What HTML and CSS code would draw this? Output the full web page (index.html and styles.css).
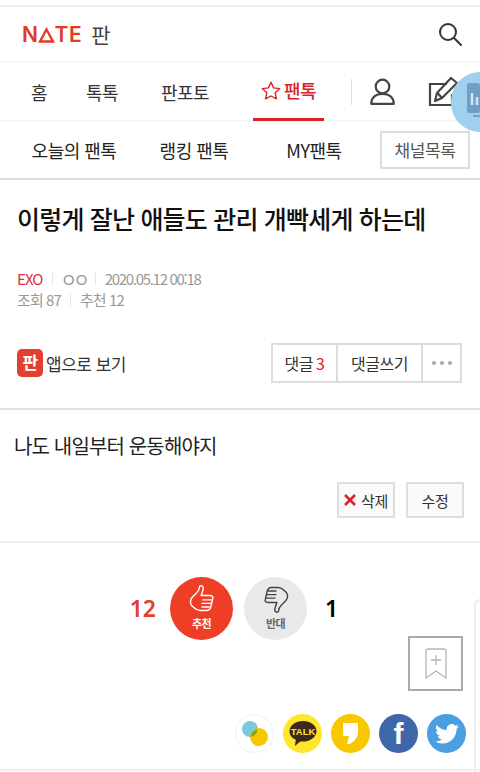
FILE: index.html
```html
<!DOCTYPE html>
<html lang="ko">
<head>
  <meta charset="UTF-8">
  <meta name="viewport" content="width=device-width, initial-scale=1.0">
  <title>NATE 판 - 팬톡</title>
  <link rel="stylesheet" href="styles.css">
</head>
<body>
  <div class="page">
    <header class="header">
      <div class="logo">
        <span class="logo-nate">N<span class="logo-a">A<svg width="17" height="16" viewBox="0 0 17 16" fill="none" stroke="#e23b1f" stroke-width="2.400" stroke-linejoin="miter"><path d="M8.500 2.500L15 14.500H2z"/></svg></span>TE</span>
        <span class="logo-pann">판</span>
      </div>
      <svg class="search-icon" width="26" height="26" viewBox="0 0 26 26" fill="none" stroke="#333" stroke-width="2"><circle cx="11" cy="11" r="8"/><path d="M17 17l7 7" stroke-linecap="round"/></svg>
    </header>

    <nav class="nav">
      <a class="nav-item nav-home">홈</a>
      <a class="nav-item nav-talk">톡톡</a>
      <a class="nav-item nav-photo">판포토</a>
      <a class="nav-item nav-fan">
        <svg width="20" height="19" viewBox="0 0 20 19" fill="none" stroke="#d8232a" stroke-width="1.400" stroke-linejoin="round"><path d="M10 1.200l2.600 5.700 6.100.7-4.500 4.200 1.200 6.100L10 15l-5.400 2.900 1.200-6.100L1.300 7.600l6.100-.7z"/></svg>
        팬톡
      </a>
      <span class="nav-divider"></span>
      <svg class="nav-user" width="25" height="27" viewBox="0 0 25 27" fill="none" stroke="#444" stroke-width="2.200"><circle cx="12.500" cy="8.500" r="6.800"/><path d="M1.200 25.800c0-6 4.300-10 11.300-10s11.300 4 11.300 10z" stroke-linejoin="round"/></svg>
      <svg class="nav-write" width="32" height="32" viewBox="0 0 32 32" fill="none" stroke="#444" stroke-width="2.200"><path d="M19 8H2v21h22V18"/><path d="M7 25l2-8L23 2l6 5-15 15z" stroke-linejoin="round"/><path d="M9.500 17l4.500 5" /></svg>
    </nav>

    <div class="subnav">
      <a class="subnav-item">오늘의 팬톡</a>
      <a class="subnav-item">랭킹 팬톡</a>
      <a class="subnav-item">MY팬톡</a>
      <a class="channel-btn">채널목록</a>
    </div>

    <section class="post-head">
      <h1 class="post-title">이렇게 잘난 애들도 관리 개빡세게 하는데</h1>
      <div class="meta">
        <span class="meta-channel">EXO</span><span class="meta-sep"></span><span class="meta-author">ㅇㅇ</span><span class="meta-sep"></span><span class="meta-date">2020.05.12 00:18</span>
      </div>
      <div class="meta">
        <span>조회 87</span><span class="meta-sep"></span><span>추천 12</span>
      </div>
      <div class="post-actions">
        <div class="app-link">
          <span class="app-icon">판</span>
          <span>앱으로 보기</span>
        </div>
        <div class="btn-group">
          <a class="group-btn group-reply">댓글 <em>3</em></a>
          <a class="group-btn group-write">댓글쓰기</a>
          <a class="group-btn group-more"><i></i><i></i><i></i></a>
        </div>
      </div>
    </section>

    <section class="post-body">
      <p class="post-text">나도 내일부터 운동해야지</p>
      <div class="edit-row">
        <a class="edit-btn"><svg width="12" height="12" viewBox="0 0 12 12" stroke="#d8232a" stroke-width="2.600"><path d="M1 1l10 10M11 1L1 11"/></svg>삭제</a>
        <a class="edit-btn">수정</a>
      </div>
    </section>

    <section class="vote">
      <div class="vote-row">
        <span class="vote-count vote-count-up">12</span>
        <div class="vote-btn vote-up">
          <svg width="28" height="30" viewBox="0 0 30 34" fill="none" stroke="#fff" stroke-width="1.600" stroke-linejoin="round" stroke-linecap="round"><path d="M14 2c2 0 3 2 2 5l-2 6h10c3 0 4 2 3 4l-2 9c-1 3-3 4-5 4h-7c-3 0-5-1-7-3l-3-3c-2-3-1-7 1-9l5-5c3-3 3-5 3-6 0-1 1-2 2-2z"/><path d="M16 18h10M15 22h10M15 26h9"/></svg>
          <span class="vote-label">추천</span>
        </div>
        <div class="vote-btn vote-down">
          <svg width="28" height="30" viewBox="0 0 30 34" fill="none" stroke="#444" stroke-width="1.600" stroke-linejoin="round" stroke-linecap="round"><path d="M16 32c-2 0-3-2-2-5l2-6H6c-3 0-4-2-3-4l2-9c1-3 3-4 5-4h7c3 0 5 1 7 3l3 3c2 3 1 7-1 9l-5 5c-3 3-3 5-3 6 0 1-1 2-2 2z"/><path d="M14 16H4M15 12H5M15 8H6"/></svg>
          <span class="vote-label">반대</span>
        </div>
        <span class="vote-count vote-count-down">1</span>
      </div>
      <div class="bookmark-row">
        <a class="bookmark-btn">
          <svg width="22" height="31" viewBox="0 0 22 31" fill="none" stroke="#b5b5b5" stroke-width="1.300"><path d="M1 3a2 2 0 012-2h16a2 2 0 012 2v27l-10-7-10 7z"/><path d="M11 7v10M6 12h10"/></svg>
        </a>
      </div>
      <div class="share-row">
        <span class="share share-line">
          <svg width="27" height="27" viewBox="0 0 27 27"><circle cx="9" cy="9" r="8" fill="#7cc8de"/><circle cx="18" cy="17" r="9" fill="#f7c800"/><path d="M9.500 17a9 9 0 017-8 8 8 0 01-7 8z" fill="#7fa82c"/><path d="M14 26l5-1-4-2z" fill="#f7c800"/></svg>
        </span>
        <span class="share share-talk">
          <svg width="30" height="27" viewBox="0 0 32 30"><path d="M16 1c8.500 0 15 5 15 11.500S24.500 24 16 24c-1 0-2 0-3-.2L7 29l1-7C3.500 20 1 16.500 1 12.500 1 6 7.500 1 16 1z" fill="#3a2a1c"/><text x="16" y="16.500" class="talk-text">TALK</text></svg>
        </span>
        <span class="share share-story">
          <svg width="15" height="21" viewBox="0 0 15 21"><path d="M0 0h15v9c0 5-3 9-8 12H4l2-8H0z" fill="#fff"/></svg>
        </span>
        <span class="share share-fb">f</span>
        <span class="share share-tw">
          <svg width="24" height="20" viewBox="0 0 24 20"><path d="M24 2.400a10 10 0 01-2.800.8A5 5 0 0023.300.500a10 10 0 01-3.100 1.200 4.900 4.900 0 00-8.400 4.500A14 14 0 011.700.900a4.900 4.900 0 001.500 6.600 4.900 4.900 0 01-2.200-.6c0 2.400 1.700 4.400 3.900 4.900a5 5 0 01-2.200.1 4.900 4.900 0 004.600 3.400A9.900 9.900 0 010 17.300 14 14 0 007.500 19.500c9.100 0 14.300-7.700 14-14.600A10 10 0 0024 2.400z" fill="#fff"/></svg>
        </span>
      </div>
    </section>
  </div>

  <!-- floating stuff on top of the page -->
  <div class="float-stats">
    <svg width="13" height="35" viewBox="0 0 13 35"><rect x="0" y="0" width="13" height="30" rx="2" fill="#6f9fc4"/><path d="M5 10v12M10 14v8" stroke="#cfe6f5" stroke-width="2.500"/><rect x="6" y="32" width="7" height="2" fill="#6f9fc4"/></svg>
  </div>
  <div class="side-panel"></div>
</body>
</html>
```

FILE: styles.css
```css
* {
  box-sizing: border-box;
}

html, body {
  margin: 0;
  padding: 0;
  height: 100%;
  overflow: hidden;
}

body {
  font-family: "Noto Sans CJK KR", "Noto Sans", sans-serif;
  background-color: #fff;
  color: #222;
  position: relative;
}

a {
  color: inherit;
  text-decoration: none;
}

.page {
  width: 480px;
  padding-top: 5px;
}

.header {
  display: flex;
  justify-content: space-between;
  align-items: center;
  height: 58px;
  padding: 0 17px 0 22px;
  border-top: 2px solid #f0f0f0;
  border-bottom: 2px solid #f6f6f6;
}

.logo {
  display: flex;
  align-items: center;
  gap: 9px;
}

.logo-nate {
  font-family: Inter, sans-serif;
  font-size: 21px;
  font-weight: 600;
  letter-spacing: 0.6px;
  color: #e23b1f;
}

/* the logo's A is a plain triangle, so the letter is hidden under the drawing */
.logo-a {
  position: relative;
  color: transparent;
}

.logo-a svg {
  position: absolute;
  left: -1px;
  top: 5px;
}

.logo-pann {
  font-size: 21px;
  color: #444;
}

.nav {
  display: flex;
  align-items: center;
  height: 59px;
  padding-left: 14px;
  font-size: 18px;
  letter-spacing: -0.6px;
  color: #333;
  border-bottom: 2px solid #f6f6f6;
}

.nav-item {
  display: flex;
  align-items: center;
  justify-content: center;
  height: 59px;
}

.nav-home {
  width: 50px;
}

.nav-talk {
  width: 76px;
}

.nav-photo {
  width: 90px;
  margin-right: 23px;
}

.nav-fan {
  width: 71px;
  gap: 3px;
  font-weight: 500;
  color: #d8232a;
  border-bottom: 3px solid #d8232a;
}

.nav-divider {
  width: 1px;
  height: 26px;
  margin-left: 27px;
  background-color: #ddd;
}

.nav-user {
  margin-left: 18px;
}

.nav-write {
  margin-left: 33px;
}

.subnav {
  display: flex;
  align-items: center;
  height: 58px;
  padding-left: 14px;
  font-size: 18px;
  letter-spacing: -0.5px;
  border-bottom: 2px solid #ddd;
}

.subnav-item {
  width: 120px;
  text-align: center;
}

.channel-btn {
  width: 90px;
  height: 38px;
  margin-left: 6px;
  line-height: 33px;
  text-align: center;
  font-size: 17px;
  letter-spacing: -0.4px;
  color: #555;
  border: 2px solid #ddd;
}

.post-head {
  padding: 18px 18px 0 17px;
  border-bottom: 2px solid #e2e2e2;
  height: 230px;
}

.post-title {
  margin: 0;
  height: 40px;
  line-height: 40px;
  font-size: 25px;
  font-weight: 500;
  letter-spacing: -0.8px;
  white-space: nowrap;
  color: #111;
}

.meta {
  display: flex;
  align-items: center;
  height: 21px;
  font-size: 15px;
  letter-spacing: -0.9px;
  color: #999;
}

.post-title + .meta {
  margin-top: 30px;
}

.meta-channel {
  color: #d8323a;
}

.meta-author {
  font-size: 18px;
  letter-spacing: -4px;
  margin-left: -1px;
}

.meta-date {
  letter-spacing: -1.3px;
}

.meta-sep {
  width: 1px;
  height: 12px;
  margin: 0 9px;
  background-color: #e6e6e6;
}

.post-actions {
  display: flex;
  justify-content: space-between;
  align-items: center;
  margin-top: 33px;
}

.app-link {
  display: flex;
  align-items: center;
  gap: 3px;
  font-size: 17px;
  letter-spacing: -0.5px;
  color: #333;
}

.app-icon {
  width: 26px;
  height: 28px;
  line-height: 26px;
  text-align: center;
  font-size: 17px;
  font-weight: 700;
  color: #fff;
  background-color: #e2402f;
  border-radius: 5px;
}

.btn-group {
  display: flex;
  height: 40px;
  border: 2px solid #ddd;
  font-size: 16px;
  letter-spacing: -0.5px;
  color: #333;
}

.group-btn {
  display: flex;
  align-items: center;
  justify-content: center;
  gap: 3px;
}

.group-btn em {
  font-style: normal;
  color: #d8232a;
}

.group-reply {
  width: 65px;
  border-right: 2px solid #ddd;
}

.group-write {
  width: 85px;
  border-right: 2px solid #ddd;
}

.group-more {
  width: 37px;
  gap: 4px;
}

.group-more i {
  width: 4px;
  height: 4px;
  border-radius: 50%;
  background-color: #aaa;
}

.post-body {
  height: 133px;
  padding: 0 16px 0 14px;
  border-bottom: 2px solid #f0f0f0;
}

.post-text {
  margin: 0;
  padding-top: 22px;
  font-size: 20px;
  line-height: 28px;
  letter-spacing: -0.85px;
  color: #222;
}

.edit-row {
  display: flex;
  justify-content: flex-end;
  gap: 11px;
  margin-top: 22px;
}

.edit-btn {
  display: flex;
  align-items: center;
  justify-content: center;
  gap: 5px;
  width: 58px;
  height: 36px;
  font-size: 15px;
  letter-spacing: -0.3px;
  color: #333;
  background-color: #fafafa;
  border: 2px solid #ddd;
}

.vote {
  padding-top: 33px;
}

.vote-row {
  display: flex;
  align-items: center;
  gap: 11px;
  height: 64px;
  padding-left: 126px;
}

.vote-btn {
  display: flex;
  flex-direction: column;
  align-items: center;
  width: 63px;
  height: 63px;
  padding-top: 7px;
  border-radius: 50%;
}

.vote-up {
  background-color: #ee3e26;
  color: #fff;
}

.vote-down {
  background-color: #e9e9e9;
  color: #666;
}

.vote-label {
  font-size: 11px;
  font-weight: 700;
  line-height: 18px;
  letter-spacing: -0.5px;
}

.vote-count {
  font-family: "Noto Sans", sans-serif;
  font-size: 23px;
  font-weight: 600;
  width: 30px;
}

.vote-count-up {
  color: #e2402f;
  text-align: right;
  margin-right: 3px;
}

.vote-count-down {
  color: #000;
  margin-left: 7px;
}

.bookmark-row {
  display: flex;
  justify-content: flex-end;
  padding-right: 17px;
  margin-top: -4px;
}

.bookmark-btn {
  display: flex;
  align-items: center;
  justify-content: center;
  width: 55px;
  height: 55px;
  background-color: #fff;
  border: 2px solid #aaa;
}

.share-row {
  display: flex;
  justify-content: flex-end;
  gap: 9px;
  margin-top: 23px;
  padding-right: 14px;
  height: 57px;
  border-bottom: 2px solid #f0f0f0;
}

.share {
  display: flex;
  align-items: center;
  justify-content: center;
  width: 39px;
  height: 39px;
  border-radius: 50%;
  overflow: hidden;
}

.share-line {
  background-color: #fff;
  border: 1px solid #f0f0f0;
}

.share-talk {
  background-color: #ffe52b;
}

.talk-text {
  font-family: "Liberation Sans", sans-serif;
  font-size: 10.500px;
  font-weight: 700;
  fill: #ffe52b;
  text-anchor: middle;
}

.share-story {
  background-color: #f7c800;
}

.share-fb {
  font-family: "Liberation Sans", sans-serif;
  font-size: 30px;
  font-weight: 700;
  line-height: 39px;
  color: #fff;
  background-color: #3f66a8;
}

.share-tw {
  background-color: #4a9fe0;
}

.float-stats {
  position: absolute;
  top: 72px;
  left: 451px;
  width: 29px;
  height: 60px;
  padding: 11px 0 0 16px;
  border-radius: 30px 0 0 30px;
  background-color: #9fd0ee;
}

.side-panel {
  position: absolute;
  top: 599px;
  left: 474px;
  width: 6px;
  height: 173px;
  border-top: 2px solid #eee;
  border-left: 2px solid #eee;
  border-radius: 6px 0 0 0;
}
```
